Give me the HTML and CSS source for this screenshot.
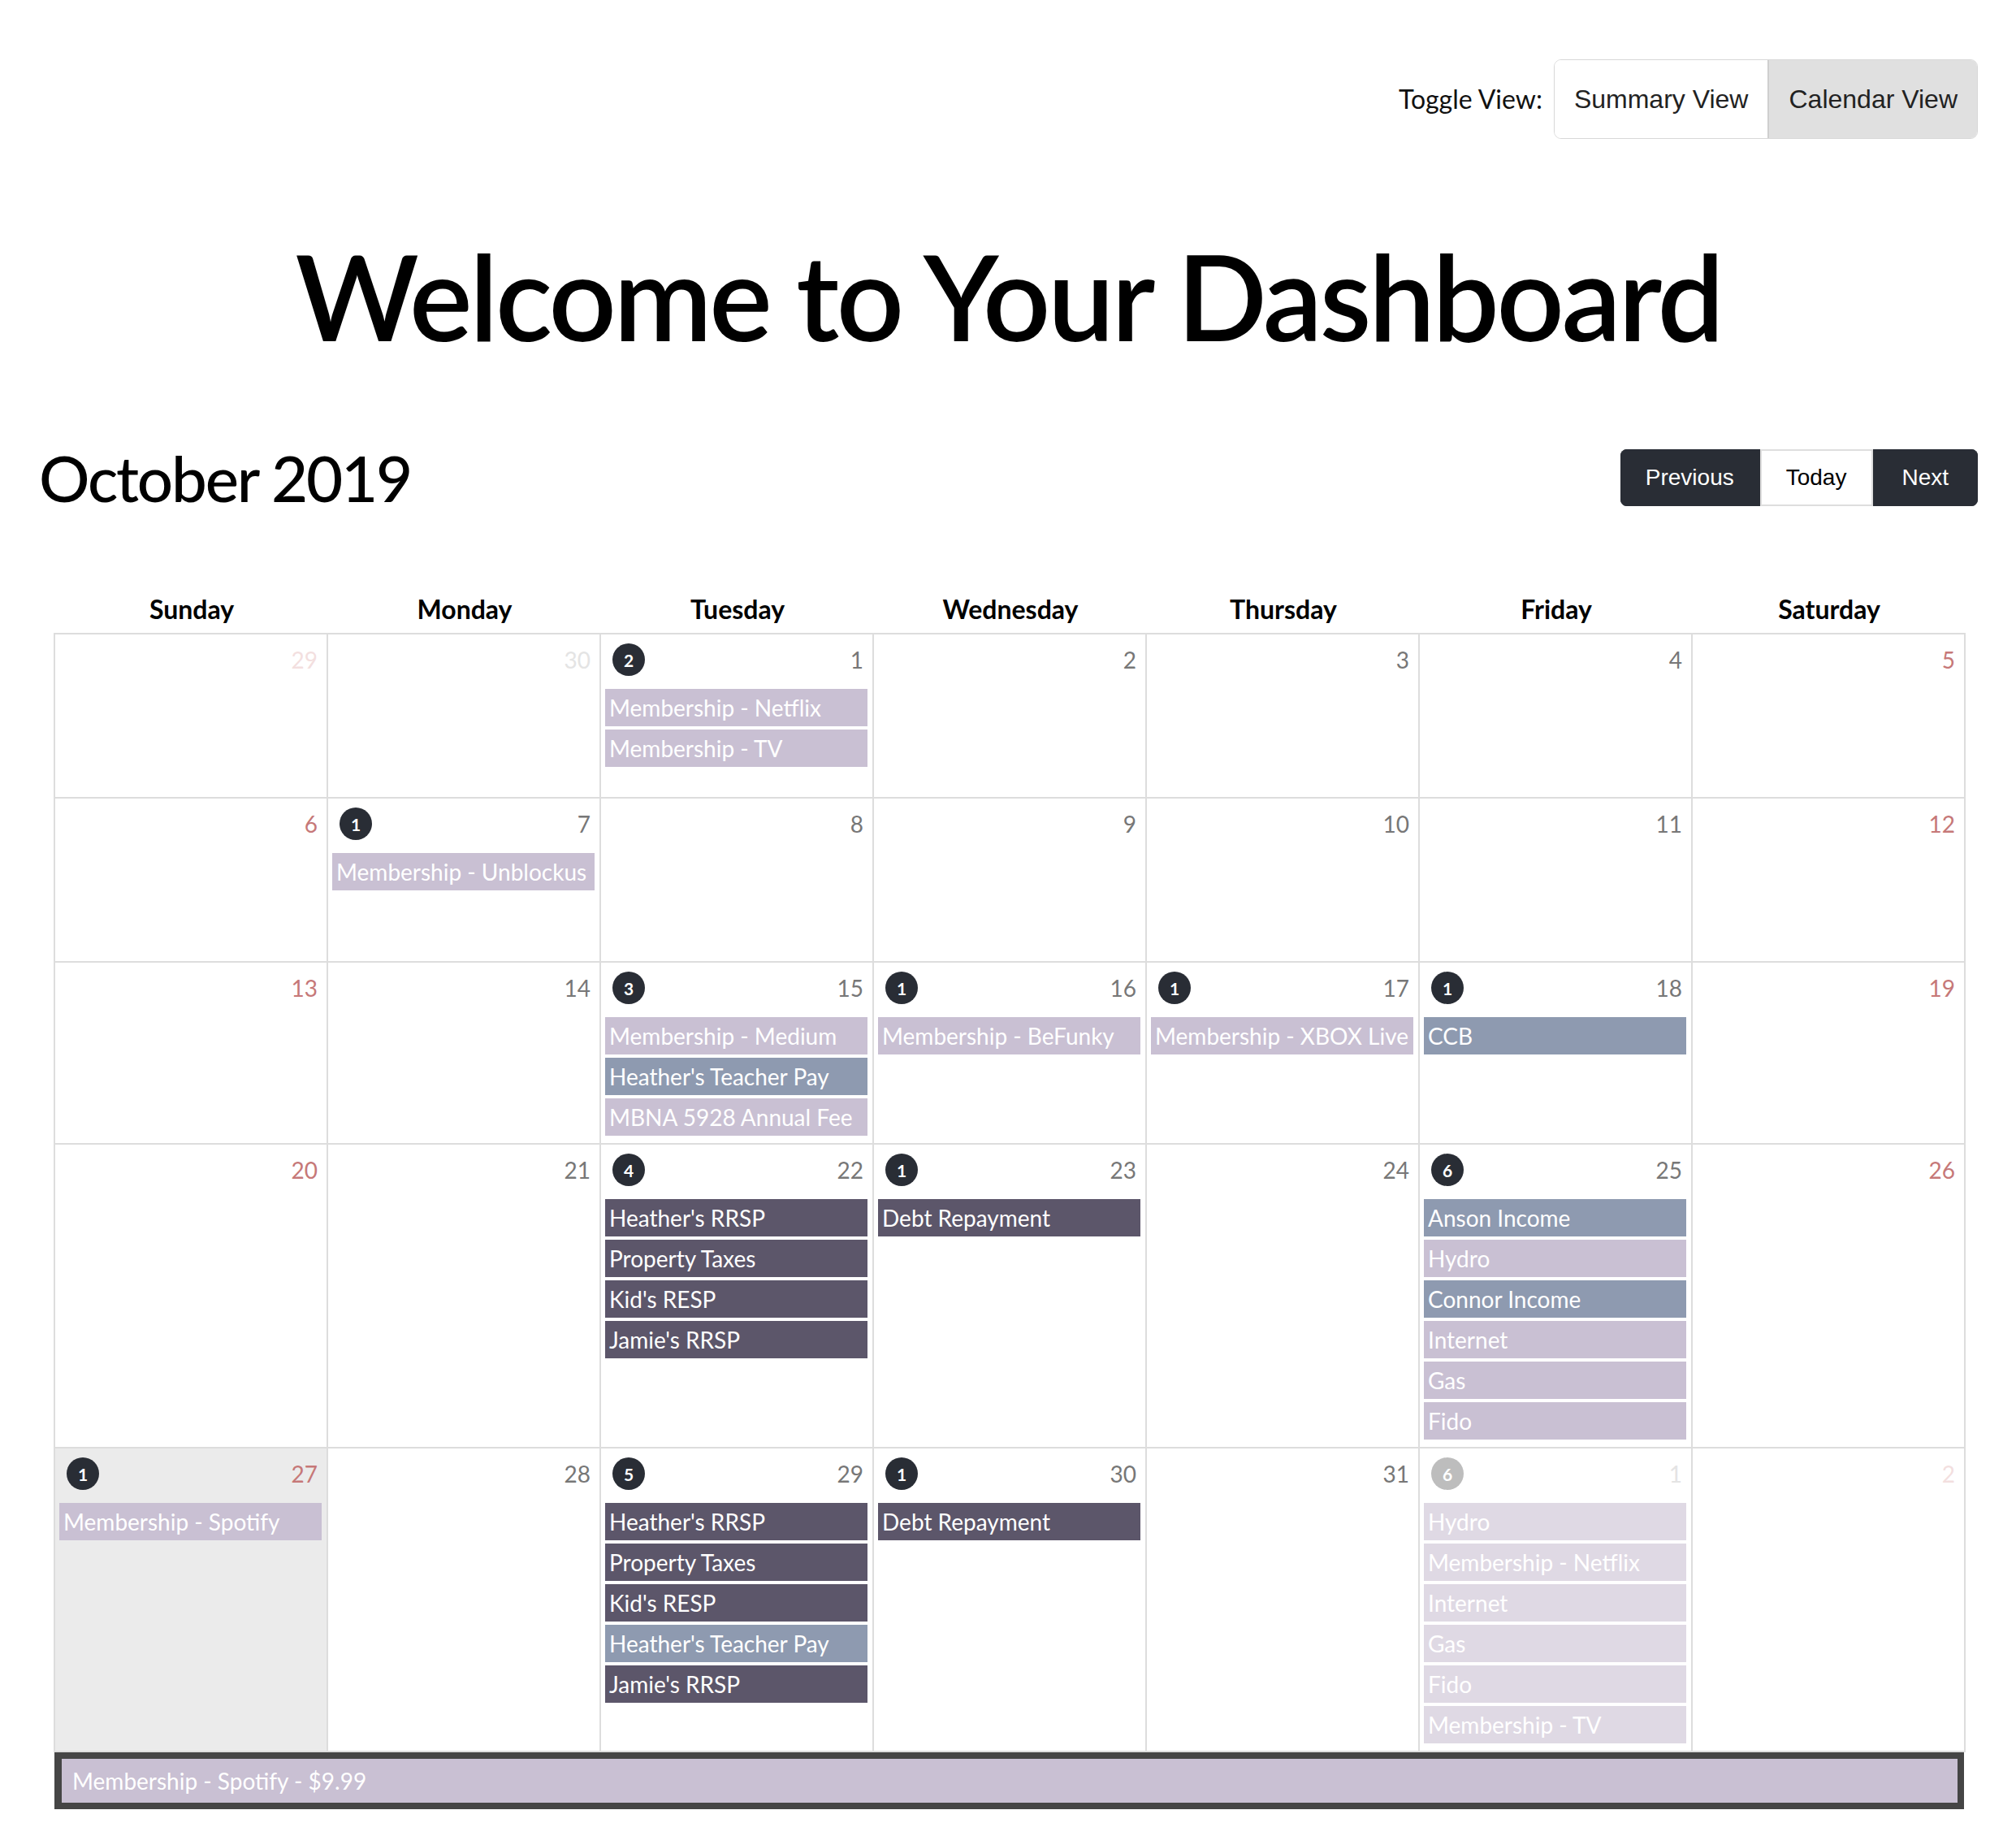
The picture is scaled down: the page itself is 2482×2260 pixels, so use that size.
FILE: index.html
```html
<!DOCTYPE html>
<html lang="en">
<head>
<meta charset="utf-8">
<title>Dashboard</title>
<link rel="stylesheet" href="styles.css">
</head>
<body>
<div class="page">
  <div class="toggle-bar">
    <span class="toggle-label">Toggle View:</span>
    <div class="toggle-group">
      <span class="toggle-btn">Summary View</span>
      <span class="toggle-btn active">Calendar View</span>
    </div>
  </div>

  <h1 class="welcome">Welcome to Your Dashboard</h1>

  <div class="cal-toolbar">
    <h2 class="month-title">October 2019</h2>
    <div class="nav-group">
      <span class="nav-btn">Previous</span>
      <span class="nav-btn light">Today</span>
      <span class="nav-btn last">Next</span>
    </div>
  </div>

  <div class="calendar">
    <div class="dow-row">
      <div class="dow">Sunday</div>
      <div class="dow">Monday</div>
      <div class="dow">Tuesday</div>
      <div class="dow">Wednesday</div>
      <div class="dow">Thursday</div>
      <div class="dow">Friday</div>
      <div class="dow">Saturday</div>
    </div>
    <div class="month-grid">
      <!-- week 1 -->
      <div class="day"><div class="day-head"><span class="num off-weekend">29</span></div></div>
      <div class="day"><div class="day-head"><span class="num off">30</span></div></div>
      <div class="day"><div class="day-head"><span class="badge">2</span><span class="num">1</span></div>
        <div class="event light">Membership - Netflix</div>
        <div class="event light">Membership - TV</div>
      </div>
      <div class="day"><div class="day-head"><span class="num">2</span></div></div>
      <div class="day"><div class="day-head"><span class="num">3</span></div></div>
      <div class="day"><div class="day-head"><span class="num">4</span></div></div>
      <div class="day"><div class="day-head"><span class="num weekend">5</span></div></div>
      <!-- week 2 -->
      <div class="day"><div class="day-head"><span class="num weekend">6</span></div></div>
      <div class="day"><div class="day-head"><span class="badge">1</span><span class="num">7</span></div>
        <div class="event light">Membership - Unblockus</div>
      </div>
      <div class="day"><div class="day-head"><span class="num">8</span></div></div>
      <div class="day"><div class="day-head"><span class="num">9</span></div></div>
      <div class="day"><div class="day-head"><span class="num">10</span></div></div>
      <div class="day"><div class="day-head"><span class="num">11</span></div></div>
      <div class="day"><div class="day-head"><span class="num weekend">12</span></div></div>
      <!-- week 3 -->
      <div class="day"><div class="day-head"><span class="num weekend">13</span></div></div>
      <div class="day"><div class="day-head"><span class="num">14</span></div></div>
      <div class="day"><div class="day-head"><span class="badge">3</span><span class="num">15</span></div>
        <div class="event light">Membership - Medium</div>
        <div class="event blue">Heather's Teacher Pay</div>
        <div class="event light">MBNA 5928 Annual Fee</div>
      </div>
      <div class="day"><div class="day-head"><span class="badge">1</span><span class="num">16</span></div>
        <div class="event light">Membership - BeFunky</div>
      </div>
      <div class="day"><div class="day-head"><span class="badge">1</span><span class="num">17</span></div>
        <div class="event light">Membership - XBOX Live</div>
      </div>
      <div class="day"><div class="day-head"><span class="badge">1</span><span class="num">18</span></div>
        <div class="event blue">CCB</div>
      </div>
      <div class="day"><div class="day-head"><span class="num weekend">19</span></div></div>
      <!-- week 4 -->
      <div class="day"><div class="day-head"><span class="num weekend">20</span></div></div>
      <div class="day"><div class="day-head"><span class="num">21</span></div></div>
      <div class="day"><div class="day-head"><span class="badge">4</span><span class="num">22</span></div>
        <div class="event dark">Heather's RRSP</div>
        <div class="event dark">Property Taxes</div>
        <div class="event dark">Kid's RESP</div>
        <div class="event dark">Jamie's RRSP</div>
      </div>
      <div class="day"><div class="day-head"><span class="badge">1</span><span class="num">23</span></div>
        <div class="event dark">Debt Repayment</div>
      </div>
      <div class="day"><div class="day-head"><span class="num">24</span></div></div>
      <div class="day"><div class="day-head"><span class="badge">6</span><span class="num">25</span></div>
        <div class="event blue">Anson Income</div>
        <div class="event light">Hydro</div>
        <div class="event blue">Connor Income</div>
        <div class="event light">Internet</div>
        <div class="event light">Gas</div>
        <div class="event light">Fido</div>
      </div>
      <div class="day"><div class="day-head"><span class="num weekend">26</span></div></div>
      <!-- week 5 -->
      <div class="day today"><div class="day-head"><span class="badge">1</span><span class="num weekend">27</span></div>
        <div class="event light">Membership - Spotify</div>
      </div>
      <div class="day"><div class="day-head"><span class="num">28</span></div></div>
      <div class="day"><div class="day-head"><span class="badge">5</span><span class="num">29</span></div>
        <div class="event dark">Heather's RRSP</div>
        <div class="event dark">Property Taxes</div>
        <div class="event dark">Kid's RESP</div>
        <div class="event blue">Heather's Teacher Pay</div>
        <div class="event dark">Jamie's RRSP</div>
      </div>
      <div class="day"><div class="day-head"><span class="badge">1</span><span class="num">30</span></div>
        <div class="event dark">Debt Repayment</div>
      </div>
      <div class="day"><div class="day-head"><span class="num">31</span></div></div>
      <div class="day"><div class="day-head"><span class="badge muted">6</span><span class="num off">1</span></div>
        <div class="event faded">Hydro</div>
        <div class="event faded">Membership - Netflix</div>
        <div class="event faded">Internet</div>
        <div class="event faded">Gas</div>
        <div class="event faded">Fido</div>
        <div class="event faded">Membership - TV</div>
      </div>
      <div class="day"><div class="day-head"><span class="num off-weekend">2</span></div></div>
    </div>
    <div class="detail">Membership - Spotify - $9.99</div>
  </div>
</div>
</body>
</html>
```

FILE: styles.css
```css
html, body {
  margin: 0;
  padding: 0;
  background: #fff;
}

body {
  font-family: Lato, "Noto Sans", sans-serif;
  color: #000;
}

.page {
  padding: 73px 47px 0 48px;
}

/* Toggle bar */
.toggle-bar {
  display: flex;
  justify-content: flex-end;
  align-items: center;
  gap: 14px;
}

.toggle-label {
  font-size: 32px;
  line-height: 48px;
  color: #111;
}

.toggle-group {
  display: flex;
  border: 1px solid #d8d8d8;
  border-radius: 9px;
  overflow: hidden;
}

.toggle-btn {
  font-family: "Liberation Sans", Arial, sans-serif;
  font-size: 32px;
  line-height: 48px;
  padding: 24px 24px;
  color: #222;
  background: #fff;
}

.toggle-btn + .toggle-btn {
  border-left: 2px solid #cfcfcf;
}

.toggle-btn.active {
  background: #e0e0e0;
}

/* Heading */
.welcome {
  margin: 105px 0 0;
  text-align: center;
  font-size: 146px;
  line-height: 175px;
  font-weight: 600;
  letter-spacing: -3.4px;
}

/* Toolbar */
.cal-toolbar {
  display: flex;
  justify-content: space-between;
  align-items: center;
  margin-top: 90px;
}

.month-title {
  margin: 0;
  font-size: 78px;
  line-height: 94px;
  font-weight: 500;
  letter-spacing: -2.2px;
}

.nav-group {
  display: flex;
  border-radius: 8px;
  overflow: hidden;
}

.nav-btn {
  font-family: "Liberation Sans", Arial, sans-serif;
  font-size: 28px;
  line-height: 42px;
  padding: 12px 30px 12px 29px;
  border: 2px solid #292d35;
  background: #292d35;
  color: #fff;
}

.nav-btn.light {
  background: #fff;
  color: #000;
  border-color: #dedede;
  padding: 12px 31px 12px 30px;
}

.nav-btn.last {
  padding: 12px 34px 12px 33px;
}

/* Calendar */
.calendar {
  margin: 91px 15px 0 18px;
}

.dow-row {
  display: grid;
  grid-template-columns: repeat(7, 1fr);
  padding-left: 2px;
}

.dow {
  text-align: center;
  font-size: 32px;
  line-height: 48px;
  font-weight: 700;
  padding-bottom: 5px;
}

.month-grid {
  display: grid;
  grid-template-columns: repeat(7, 1fr);
  border-top: 2px solid #dddddd;
  border-left: 2px solid #dddddd;
}

.day {
  box-sizing: border-box;
  min-height: 202px;
  min-width: 0;
  border-right: 2px solid #dddddd;
  border-bottom: 2px solid #dddddd;
  padding: 11px 6px 5px 5px;
}

.day.today {
  background: #ebebeb;
}

.day-head {
  display: flex;
  align-items: center;
  height: 40px;
  margin-bottom: 16px;
  padding: 0 5px 0 9px;
}

.badge {
  width: 40px;
  height: 40px;
  border-radius: 50%;
  background: #292d35;
  color: #fff;
  font-size: 21px;
  font-weight: 700;
  display: flex;
  align-items: center;
  justify-content: center;
}

.badge.muted {
  background: #bdbdbd;
}

.num {
  margin-left: auto;
  font-size: 28px;
  line-height: 40px;
  color: #777;
}

.num.weekend {
  color: #c67878;
}

.num.off {
  color: #e4e4e4;
}

.num.off-weekend {
  color: #f3dfdf;
}

.event {
  height: 46px;
  line-height: 46px;
  font-size: 28px;
  color: #fff;
  padding-left: 5px;
  margin-bottom: 4px;
  white-space: nowrap;
  overflow: hidden;
}

.event.light {
  background: #c9c0d3;
}

.event.blue {
  background: #8e9ab0;
}

.event.dark {
  background: #5c566a;
}

.event.faded {
  background: #dfd9e4;
}

.detail {
  margin: 0 2px 0 1px;
  border-style: solid;
  border-color: #454545;
  border-width: 8px 8px 8px 9px;
  background: #c9c0d3;
  color: #fff;
  font-size: 28px;
  line-height: 54px;
  padding-left: 13px;
}
```
